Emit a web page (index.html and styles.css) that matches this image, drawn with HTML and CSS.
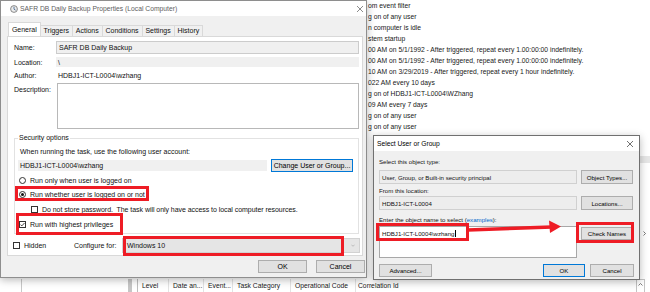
FILE: index.html
```html
<!DOCTYPE html>
<html lang="en">
<head>
    <meta charset="UTF-8" />
    <title>SAFR DB Daily Backup Properties</title>
    <link rel="stylesheet" href="styles.css">
</head>
<body>
<div class="desktop">

    <!-- 背景：工作排程器主視窗 -->
    <div class="triggers">
        <div>om event filter</div>
        <div>g on of any user</div>
        <div>n computer is idle</div>
        <div>stem startup</div>
        <div>00 AM on 5/1/1992 - After triggered, repeat every 1.00:00:00 indefinitely.</div>
        <div>00 AM on 5/1/1992 - After triggered, repeat every 1.00:00:00 indefinitely.</div>
        <div>10 AM on 3/29/2019 - After triggered, repeat every 1 hour indefinitely.</div>
        <div>022 AM every 10 days</div>
        <div>g on of HDBJ1-ICT-L0004\WZhang</div>
        <div>09 AM every 7 days</div>
        <div>g on of any user</div>
        <div>g on of any user</div>
    </div>
    <div class="history-head">
        <span class="hh-gutter"></span>
        <span class="hh-tree"></span>
        <span class="hh-split"></span>
        <span class="hh-pad"></span>
        <span class="hh-col c-level">Level</span>
        <span class="hh-col c-date">Date an...</span>
        <span class="hh-col c-event">Event...</span>
        <span class="hh-col c-cat">Task Category</span>
        <span class="hh-col c-op">Operational Code</span>
        <span class="hh-col c-corr">Correlation Id</span>
        <span class="hh-scroll">
            <svg viewBox="0 0 5 3"><path d="M.5 2.5L2.5 .5 4.5 2.5" /></svg>
        </span>
        <span class="hh-end"></span>
    </div>
    <span class="pane-sel"></span>
    <svg class="pane-arrow" viewBox="0 0 3 5"><path d="M.5 .5L2.5 2.5 .5 4.5" /></svg>

    <!-- 工作內容視窗 -->
    <div class="window props">
        <div class="titlebar">
            <svg class="app-icon" viewBox="0 0 8 8">
                <circle cx="4" cy="4" r="3.4" fill="#ececec" stroke="#707070" stroke-width=".8" />
                <path d="M4 1.8v2.4l1.6 1" fill="none" stroke="#3b5f8a" stroke-width=".8" />
            </svg>
            <span class="title">SAFR DB Daily Backup Properties (Local Computer)</span>
            <svg class="close" viewBox="0 0 6 6"><path d="M0 0L6 6M6 0L0 6" /></svg>
        </div>
        <div class="props-body">
            <div class="tabs">
                <span class="tab active">General</span>
                <span class="tab">Triggers</span>
                <span class="tab">Actions</span>
                <span class="tab">Conditions</span>
                <span class="tab">Settings</span>
                <span class="tab">History</span>
            </div>
            <div class="panel">
                <div class="info">
                    <span class="lbl">Name:</span>
                    <span class="field boxed">SAFR DB Daily Backup</span>
                    <span class="lbl">Location:</span>
                    <span class="field">\</span>
                    <span class="lbl">Author:</span>
                    <span class="field plain">HDBJ1-ICT-L0004\wzhang</span>
                    <span class="lbl top">Description:</span>
                    <span class="desc"></span>
                </div>

                <fieldset class="security">
                    <legend>Security options</legend>
                    <div class="hint">When running the task, use the following user account:</div>
                    <div class="account-row">
                        <span class="field account">HDBJ1-ICT-L0004\wzhang</span>
                        <button class="btn focus change" type="button">Change User or Group...</button>
                    </div>
                    <div class="opt first"><span class="radio"></span>Run only when user is logged on</div>
                    <div class="opt"><span class="radio on"></span>Run whether user is logged on or not</div>
                    <div class="opt chk sub">
                        <span class="check"></span>Do not store password.&nbsp; The task will only have access to local computer resources.
                    </div>
                    <div class="opt chk">
                        <span class="check on">
                            <svg viewBox="0 0 5 5"><path d="M.5 2.6l1.3 1.3L4.5 1" /></svg>
                        </span>Run with highest privileges
                    </div>
                </fieldset>

                <div class="config-row">
                    <span class="hidden-opt"><span class="check"></span>Hidden</span>
                    <span class="config-lbl">Configure for:</span>
                    <span class="select">
                        Windows 10
                        <svg class="caret" viewBox="0 0 5 3"><path d="M.5 .5L2.5 2.5 4.5 .5" /></svg>
                    </span>
                </div>
            </div>
            <div class="actions">
                <button class="btn" type="button">OK</button>
                <button class="btn" type="button">Cancel</button>
            </div>
        </div>
    </div>

    <!-- 選取使用者或群組 -->
    <div class="window picker">
        <div class="titlebar">
            <span class="title">Select User or Group</span>
            <svg class="close" viewBox="0 0 6 6"><path d="M0 0L6 6M6 0L0 6" /></svg>
        </div>
        <div class="picker-body">
            <div class="pk-lbl">Select this object type:</div>
            <div class="pk-row">
                <span class="pk-field">User, Group, or Built-in security principal</span>
                <button class="btn" type="button">Object Types...</button>
            </div>
            <div class="pk-lbl l2">From this location:</div>
            <div class="pk-row r2">
                <span class="pk-field">HDBJ1-ICT-L0004</span>
                <button class="btn" type="button">Locations...</button>
            </div>
            <div class="pk-lbl l3">Enter the object name to select (<span class="link">examples</span>):</div>
            <div class="pk-row names">
                <span class="pk-text">HDBJ1-ICT-L0004\wzhang<span class="caret-line"></span></span>
                <button class="btn" type="button">Check Names</button>
            </div>
            <div class="pk-actions">
                <button class="btn adv" type="button">Advanced...</button>
                <button class="btn focus ok" type="button">OK</button>
                <button class="btn cancel" type="button">Cancel</button>
            </div>
        </div>
    </div>

    <!-- 紅框標註 -->
    <span class="mark m-radio"></span>
    <span class="mark m-priv"></span>
    <span class="mark m-config"></span>
    <span class="mark m-name"></span>
    <span class="mark m-check"></span>
    <svg class="arrow" viewBox="0 0 98 16">
        <path d="M2 11L86 8" stroke="#ee1c25" stroke-width="3.5" fill="none" />
        <polygon points="83,1.5 95,7.5 84,14" fill="#ee1c25" />
    </svg>
</div>
</body>
</html>
```

FILE: styles.css
```css
*, *::before, *::after {
    box-sizing: border-box;
    margin: 0;
    padding: 0;
}

html, body {
    width: 650px;
    height: 292px;
    overflow: hidden;
}

body {
    background: #FFFFFF;
    font-family: "Liberation Sans", Arial, sans-serif;
    color: #111111;
}

.desktop {
    position: relative;
    width: 650px;
    height: 292px;
    overflow: hidden;
}

/* 背景視窗 */
.triggers {
    height: 279px;
    padding-left: 368px;
    font-size: 6.75px;
    line-height: 11px;
    color: #202020;
    white-space: nowrap;
    overflow: hidden;
}

.history-head {
    display: flex;
    height: 13px;
    font-size: 6.75px;
    line-height: 13px;
    color: #202020;
    white-space: nowrap;
}

    .hh-gutter {
        width: 22px;
        border-right: 1px solid #C8C8C8;
    }

    .hh-tree {
        width: 106px;
    }

    .hh-split {
        width: 4px;
        background: #C6C6C6;
    }

    .hh-pad {
        width: 6px;
        border-right: 1px solid #BDBDBD;
    }

    .hh-col {
        padding-left: 4px;
        border-right: 1px solid #E3E3E3;
        overflow: hidden;
    }

    .c-level { width: 31px; }
    .c-date { width: 35px; }
    .c-event { width: 29px; }
    .c-cat { width: 58px; }
    .c-op { width: 65px; }

    .c-corr {
        flex: 1;
        padding-left: 2px;
        border-right: none;
    }

    .hh-scroll {
        width: 9px;
        border: 1px solid #C4C4C4;
        border-bottom: none;
        display: flex;
        justify-content: center;
        padding-top: 3px;
    }

        .hh-scroll svg {
            width: 5px;
            height: 3px;
            fill: none;
            stroke: #606060;
            stroke-width: .8;
        }

    .hh-end {
        width: 5px;
    }

.pane-sel {
    position: absolute;
    left: 640px;
    top: 156px;
    width: 10px;
    height: 7px;
    background: #E6E6E6;
}

.pane-arrow {
    position: absolute;
    left: 643px;
    top: 231px;
    width: 3px;
    height: 5px;
    fill: none;
    stroke: #555555;
    stroke-width: .8;
}

/* 視窗共用 */
.window {
    position: absolute;
    display: flex;
    flex-direction: column;
    background: #F0F0F0;
    border: 1px solid #8E8E8E;
    box-shadow: 0 2px 8px rgba(0, 0, 0, 0.28);
}

.titlebar {
    flex: none;
    display: flex;
    align-items: center;
    height: 15px;
    background: #FFFFFF;
}

.title {
    flex: 1;
    font-size: 6.75px;
    white-space: nowrap;
}

.close {
    width: 6px;
    height: 6px;
    fill: none;
    stroke: #5A5A5A;
    stroke-width: .7;
}

.btn {
    display: flex;
    align-items: center;
    justify-content: center;
    font: inherit;
    color: #000000;
    background: #E1E1E1;
    border: 1px solid #ADADAD;
    white-space: nowrap;
}

    .btn.focus {
        border-color: #0078D7;
    }

/* 工作內容視窗 */
.props {
    left: 0;
    top: 0;
    width: 367px;
    font-size: 7px;
}

    .props .titlebar {
        padding: 0 3px 0 9px;
    }

    .props .title {
        color: #5E5E5E;
    }

.app-icon {
    width: 8px;
    height: 8px;
    margin-right: 2px;
}

.props-body {
    display: flex;
    flex-direction: column;
    padding: 6px 3px 4px 6px;
}

.tabs {
    display: flex;
    align-items: flex-start;
    height: 15px;
    margin-bottom: -1px;
    padding-left: 1px;
}

.tab {
    height: 11px;
    margin-top: 3px;
    padding: 0 2.9px;
    line-height: 10px;
    background: #F0F0F0;
    border: 1px solid #D9D9D9;
    border-left: none;
    border-bottom: none;
    white-space: nowrap;
}

    .tab.active {
        height: 15px;
        margin-top: 0;
        line-height: 14px;
        background: #FFFFFF;
        border-left: 1px solid #D9D9D9;
    }

.panel {
    background: #FFFFFF;
    border: 1px solid #D9D9D9;
    padding: 4px 3px 2px 6px;
}

.info {
    display: grid;
    grid-template-columns: 42px 1fr;
    grid-template-rows: 13px 10px 10px 46px;
    row-gap: 3px;
}

.lbl {
    display: flex;
    align-items: center;
}

    .lbl.top {
        align-items: flex-start;
        padding-top: 3px;
        line-height: 8px;
    }

.field {
    display: flex;
    align-items: center;
    padding-left: 2px;
    background: #F0F0F0;
    white-space: nowrap;
}

    .field.boxed {
        border: 1px solid #CCCCCC;
    }

    .field.plain {
        background: none;
    }

.desc {
    margin-left: 1px;
    background: #FFFFFF;
    border: 1px solid #B8B8B8;
}

.security {
    margin-top: 5px;
    padding: 0 3px 4px 3px;
    border: 1px solid #E2E2E2;
    min-inline-size: 0;
}

    .security legend {
        padding: 0 1px;
        line-height: 8px;
    }

.hint {
    margin-top: 6px;
    padding-left: 2px;
    line-height: 8px;
}

.account-row {
    display: flex;
    align-items: center;
    gap: 4px;
    height: 13px;
    margin-top: 3px;
}

.account {
    width: 249px;
    height: 11px;
}

.change {
    width: 82px;
    height: 13px;
}

.opt {
    display: flex;
    align-items: center;
    gap: 4px;
    height: 10px;
    margin-top: 4px;
    white-space: nowrap;
}

    .opt.first {
        margin-top: 3px;
    }

    .opt.chk {
        margin-top: 5px;
    }

.radio {
    display: grid;
    place-items: center;
    width: 7px;
    height: 7px;
    margin-left: 1px;
    border: 1px solid #333333;
    border-radius: 50%;
}

    .radio.on::after {
        content: "";
        width: 3px;
        height: 3px;
        border-radius: 50%;
        background: #111111;
    }

.check {
    display: grid;
    place-items: center;
    flex: none;
    width: 7px;
    height: 7px;
    margin-left: 1px;
    border: 1px solid #333333;
    background: #FFFFFF;
}

    .check svg {
        width: 5px;
        height: 5px;
        fill: none;
        stroke: #111111;
        stroke-width: .8;
    }

.sub {
    letter-spacing: -0.05px;
}

    .sub .check {
        margin-left: 13px;
    }

.config-row {
    display: flex;
    align-items: center;
    height: 15px;
    margin-top: 4px;
}

.hidden-opt {
    display: flex;
    align-items: center;
    gap: 4px;
    width: 62px;
    margin-left: -2px;
}

.config-lbl {
    width: 48px;
    white-space: nowrap;
}

.select {
    flex: 1;
    display: flex;
    align-items: center;
    height: 15px;
    margin-right: -1px;
    padding: 0 4px 0 4px;
    background: #E5E5E5;
    border: 1px solid #D2D2D2;
}

.caret {
    width: 4px;
    height: 3px;
    margin-left: auto;
    fill: none;
    stroke: #9A9A9A;
    stroke-width: .7;
}

.actions {
    display: flex;
    justify-content: flex-end;
    gap: 9px;
    margin-top: 4px;
    margin-right: -2px;
}

    .actions .btn {
        width: 49px;
        height: 13px;
    }

/* 選取使用者或群組 */
.picker {
    left: 373px;
    top: 135px;
    width: 267px;
    font-size: 6.1px;
    border-color: #707070;
}

    .picker .titlebar {
        padding: 0 6px 0 3px;
    }

    .picker .title {
        color: #000000;
        font-size: 6.7px;
    }

    .picker .close {
        stroke: #333333;
    }

.picker-body {
    display: flex;
    flex-direction: column;
    padding: 7px 5px 2px 5px;
}

.pk-lbl {
    line-height: 8px;
    white-space: nowrap;
}

    .pk-lbl.l2 {
        margin-top: 3px;
    }

    .pk-lbl.l3 {
        margin-top: 6px;
    }

.link {
    color: #0066CC;
}

.pk-row {
    display: flex;
    gap: 4px;
    height: 14px;
    margin-top: 4px;
}

    .pk-row.r2 {
        margin-top: 1px;
    }

    .pk-row.names {
        height: 32px;
        margin-top: 2px;
    }

    .pk-row .btn {
        width: 52px;
    }

    .pk-row.names .btn {
        height: 13px;
        margin-top: 1px;
    }

.pk-field {
    display: flex;
    align-items: center;
    width: 198px;
    padding-left: 2px;
    background: #EDEDED;
    border: 1px solid #D0D0D0;
    white-space: nowrap;
}

.pk-text {
    width: 198px;
    padding: 3px 2px;
    line-height: 8px;
    background: #FFFFFF;
    border: 1px solid #A8A8A8;
    white-space: nowrap;
}

.caret-line {
    display: inline-block;
    width: 1px;
    height: 7px;
    margin-left: 1px;
    vertical-align: -1px;
    background: #000000;
}

.pk-actions {
    display: flex;
    height: 13px;
    margin-top: 6px;
}

    .pk-actions .adv {
        width: 53px;
        margin-right: auto;
    }

    .pk-actions .ok {
        width: 42px;
        margin-right: 5px;
    }

    .pk-actions .cancel {
        width: 44px;
    }

/* 紅框標註 */
.mark {
    position: absolute;
    border: 3px solid #EE1C25;
}

.m-radio {
    left: 15px;
    top: 186px;
    width: 134px;
    height: 15px;
}

.m-priv {
    left: 16px;
    top: 213px;
    width: 107px;
    height: 22px;
}

.m-config {
    left: 123px;
    top: 236px;
    width: 221px;
    height: 20px;
}

.m-name {
    left: 376px;
    top: 223px;
    width: 93px;
    height: 18px;
}

.m-check {
    left: 576px;
    top: 222px;
    width: 58px;
    height: 21px;
}

.arrow {
    position: absolute;
    left: 466px;
    top: 219px;
    width: 98px;
    height: 16px;
}
```
